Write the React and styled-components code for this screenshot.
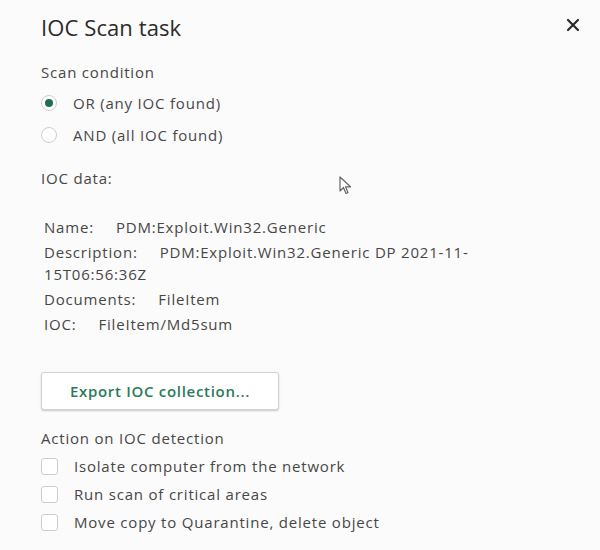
import React from "react";
import styled, { createGlobalStyle } from "styled-components";

const Global = createGlobalStyle`
  html, body { margin: 0; padding: 0; background: #fbfbfb; }
  body { font-family: "Open Sans", "Noto Sans", sans-serif; color: #444; }
`;

const Panel = styled.div`
  position: relative;
  width: 600px;
  height: 550px;
  box-sizing: border-box;
  padding: 12px 20px 0 41px;
  background: #fbfbfb;
  overflow: hidden;
`;

const Header = styled.div`
  display: flex;
  align-items: center;
  justify-content: space-between;
  height: 30px;
`;

const Title = styled.h1`
  margin: 0;
  font-size: 22px;
  font-weight: 400;
  color: #2b2b2b;
  letter-spacing: 0.1px;
`;

const Close = styled.button`
  border: 0;
  background: none;
  padding: 0;
  width: 14px;
  height: 14px;
  display: flex;
  margin-top: -5px;
  cursor: pointer;
`;

const Label = styled.div`
  font-size: 15px;
  letter-spacing: 0.8px;
  line-height: 20px;
  color: #474747;
  margin-top: ${(p) => p.$mt || 0}px;
`;

const OptionList = styled.div`
  display: flex;
  flex-direction: column;
  gap: ${(p) => p.$gap}px;
  margin-top: ${(p) => p.$mt}px;
`;

const Option = styled.label`
  display: flex;
  align-items: center;
  gap: 16px;
  font-size: 15px;
  letter-spacing: 0.8px;
  line-height: 20px;
  color: #474747;
`;

const Radio = styled.span`
  box-sizing: border-box;
  width: 16px;
  height: 16px;
  border-radius: 50%;
  border: 1px solid #cfcfcf;
  background: #fff;
  display: flex;
  align-items: center;
  justify-content: center;
  &::after {
    content: "";
    width: 8px;
    height: 8px;
    border-radius: 50%;
    background: ${(p) => (p.$checked ? "#1f6e52" : "transparent")};
  }
`;

const Check = styled.span`
  box-sizing: border-box;
  width: 17px;
  height: 17px;
  border-radius: 3px;
  border: 1px solid #cdcdcd;
  background: #fff;
`;

const DataBlock = styled.div`
  margin-top: 28px;
  padding-left: 3px;
  width: 500px;
  display: flex;
  flex-direction: column;
  gap: 3px;
`;

const DataRow = styled.div`
  font-size: 15px;
  letter-spacing: 0.8px;
  line-height: 22px;
  color: #474747;
`;

const Key = styled.span`
  margin-right: 22px;
`;

const ExportButton = styled.button`
  margin-top: 37px;
  width: 238px;
  height: 38px;
  border: 1px solid #d2d2d2;
  border-radius: 3px;
  background: #fff;
  box-shadow: 0 1px 2px rgba(0, 0, 0, 0.2);
  color: #2c7a5a;
  font-family: inherit;
  font-size: 15px;
  letter-spacing: 0.7px;
  font-weight: 600;
  cursor: pointer;
`;

const Pointer = styled.svg`
  position: absolute;
  left: 339px;
  top: 176px;
`;

export default function App() {
  return (
    <>
      <Global />
      <Panel>
        <Header>
          <Title>IOC Scan task</Title>
          <Close aria-label="Close">
            <svg width="14" height="14" viewBox="0 0 14 14">
              <path d="M2 2 L12 12 M12 2 L2 12" stroke="#2a2a2a" strokeWidth="2.2" strokeLinecap="round" />
            </svg>
          </Close>
        </Header>

        <Label $mt={20}>Scan condition</Label>
        <OptionList $gap={12} $mt={11}>
          <Option>
            <Radio $checked />
            OR (any IOC found)
          </Option>
          <Option>
            <Radio />
            AND (all IOC found)
          </Option>
        </OptionList>

        <Label $mt={23}>IOC data:</Label>

        <DataBlock>
          <DataRow>
            <Key>Name:</Key>PDM:Exploit.Win32.Generic
          </DataRow>
          <DataRow>
            <Key>Description:</Key>PDM:Exploit.Win32.Generic DP 2021-11-
            <br />
            15T06:56:36Z
          </DataRow>
          <DataRow>
            <Key>Documents:</Key>FileItem
          </DataRow>
          <DataRow>
            <Key>IOC:</Key>FileItem/Md5sum
          </DataRow>
        </DataBlock>

        <ExportButton>Export IOC collection...</ExportButton>

        <Label $mt={18}>Action on IOC detection</Label>
        <OptionList $gap={8} $mt={8}>
          <Option>
            <Check />
            Isolate computer from the network
          </Option>
          <Option>
            <Check />
            Run scan of critical areas
          </Option>
          <Option>
            <Check />
            Move copy to Quarantine, delete object
          </Option>
        </OptionList>

        <Pointer width="14" height="19" viewBox="0 0 14 19">
          <path d="M1 1 L1 15 L4.5 11.5 L7 17.5 L9 16.7 L6.6 10.8 L11.5 10.8 Z" fill="#fff" stroke="#666" strokeWidth="1.2" strokeLinejoin="round" />
        </Pointer>
      </Panel>
    </>
  );
}
